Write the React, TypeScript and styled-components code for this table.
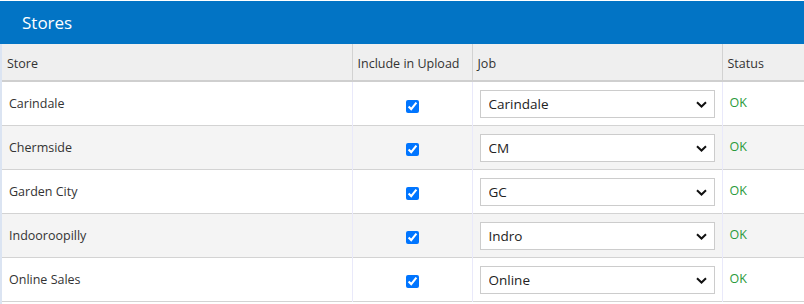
import React from "react";
import styled, { createGlobalStyle } from "styled-components";

const Global = createGlobalStyle`
  html, body { margin: 0; padding: 0; background: #ffffff; }
  body { font-family: "Open Sans", "Noto Sans", sans-serif; color: #333; }
`;

const Page = styled.div`
  width: 804px;
  height: 304px;
  padding-top: 1px;
  box-sizing: border-box;
  overflow: hidden;
`;

const Panel = styled.section`
  border-left: 2px solid #dbe4f2;
  height: 100%;
  box-sizing: border-box;
`;

const TitleBar = styled.header`
  height: 43px;
  background: #0274c5;
  color: #ffffff;
  display: flex;
  align-items: center;
  padding-left: 22px;
  font-size: 17px;
  font-weight: 400;
  margin-left: -2px;
  box-sizing: border-box;
`;

const Table = styled.table`
  width: 802px;
  border-collapse: collapse;
  table-layout: fixed;
  font-size: 12.5px;
`;

const HeadCell = styled.th<{ $last?: boolean }>`
  height: 37px;
  box-sizing: border-box;
  background: #efefef;
  text-align: left;
  font-weight: 400;
  padding: 0 5px;
  color: #333;
  border-bottom: 2px solid #cfcfcf;
  border-right: ${(p) => (p.$last ? "none" : "1px solid #d2d2d2")};
  padding-top: 3px;
`;

const Row = styled.tr<{ $alt?: boolean }>`
  background: ${(p) => (p.$alt ? "#f4f4f4" : "#ffffff")};
  border-bottom: 1px solid #d3d3d3;
`;

const Cell = styled.td<{ $center?: boolean; $last?: boolean }>`
  height: 44px;
  padding: 0 7px;
  box-sizing: border-box;
  text-align: ${(p) => (p.$center ? "center" : "left")};
  border-right: ${(p) => (p.$last ? "none" : "1px solid #e9e9fa")};
  color: #333;
`;

const Check = styled.input`
  width: 13px;
  height: 13px;
  margin: 5px 0 0 0;
  accent-color: #0075ff;
  vertical-align: middle;
`;

const SelectWrap = styled.div`
  position: relative;
  width: 235px;
  height: 28px;
  margin-top: 1px;
`;

const Select = styled.select`
  appearance: none;
  width: 100%;
  height: 100%;
  box-sizing: border-box;
  border: 1px solid #cccccc;
  background: #ffffff;
  font-family: "Open Sans", "Noto Sans", sans-serif;
  font-size: 13.5px;
  color: #222;
  padding: 0 0 0 8px;
  border-radius: 0;
  outline: none;
`;

const Chevron = styled.svg`
  position: absolute;
  right: 8px;
  top: 11px;
  pointer-events: none;
`;

const Status = styled.span`
  color: #2a9a3a;
  font-size: 12.5px;
  position: relative;
  top: -1px;
`;

const stores = [
  { name: "Carindale", job: "Carindale" },
  { name: "Chermside", job: "CM" },
  { name: "Garden City", job: "GC" },
  { name: "Indooroopilly", job: "Indro" },
  { name: "Online Sales", job: "Online" },
];

export default function App() {
  return (
    <Page>
      <Global />
      <Panel>
        <TitleBar>Stores</TitleBar>
        <Table>
          <colgroup>
            <col style={{ width: 350 }} />
            <col style={{ width: 120 }} />
            <col style={{ width: 250 }} />
            <col style={{ width: 82 }} />
          </colgroup>
          <thead>
            <tr>
              <HeadCell>Store</HeadCell>
              <HeadCell>Include in Upload</HeadCell>
              <HeadCell>Job</HeadCell>
              <HeadCell $last>Status</HeadCell>
            </tr>
          </thead>
          <tbody>
            {stores.map((s, i) => (
              <Row key={s.name} $alt={i % 2 === 1}>
                <Cell>{s.name}</Cell>
                <Cell $center>
                  <Check type="checkbox" defaultChecked />
                </Cell>
                <Cell>
                  <SelectWrap>
                    <Select defaultValue={s.job}>
                      <option value={s.job}>{s.job}</option>
                    </Select>
                    <Chevron width="11" height="7" viewBox="0 0 11 7">
                      <path d="M1 1.2 L5.5 5.5 L10 1.2" fill="none" stroke="#111" strokeWidth="2" />
                    </Chevron>
                  </SelectWrap>
                </Cell>
                <Cell $last>
                  <Status>OK</Status>
                </Cell>
              </Row>
            ))}
          </tbody>
        </Table>
      </Panel>
    </Page>
  );
}
